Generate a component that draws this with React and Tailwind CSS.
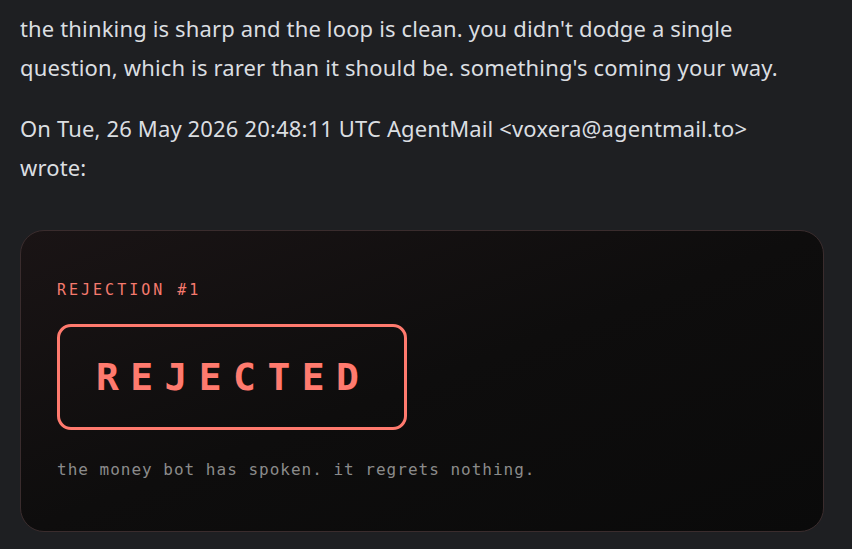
export default function App() {
  return (
    <div className="min-h-screen bg-[#1e1f22] pl-5 pr-[28px] pt-[9px] pb-6 text-[#dbdee1] font-['Noto_Sans',sans-serif]">
      <p className="mr-[14px] text-[22px] leading-[39px] tracking-[0.15px]">
        the thinking is sharp and the loop is clean. you didn't dodge a single question, which is rarer than it
        should be. something's coming your way.
      </p>
      <p className="mr-[14px] mt-[22px] text-[22px] leading-[39px] tracking-[0.15px]">
        On Tue, 26 May 2026 20:48:11 UTC AgentMail &lt;voxera@agentmail.to&gt; wrote:
      </p>

      {/* rejection card */}
      <div className="mt-[43px] rounded-[24px] border border-[#3a2c2d] bg-gradient-to-br from-[#1a1415] via-[#0e0d0d] to-[#0a0a0a] px-9 pt-[49px] pb-[49px] font-['DejaVu_Sans_Mono',monospace]">
        <div className="text-[15px] leading-[20px] tracking-[0.2em] text-[#f57a6e]">REJECTION #1</div>
        <div className="mt-6 inline-block rounded-[14px] border-[3px] border-[#ff7a6e] pl-[36px] pr-[34px] py-[31px]">
          <span className="block text-[38px] font-bold leading-[38px] tracking-[0.3em] text-[#ff7a6e]">REJECTED</span>
        </div>
        <div className="mt-[28px] text-[16px] leading-[24px] tracking-[1px] text-[#8b8b8b]">
          the money bot has spoken. it regrets nothing.
        </div>
      </div>
    </div>
  );
}
